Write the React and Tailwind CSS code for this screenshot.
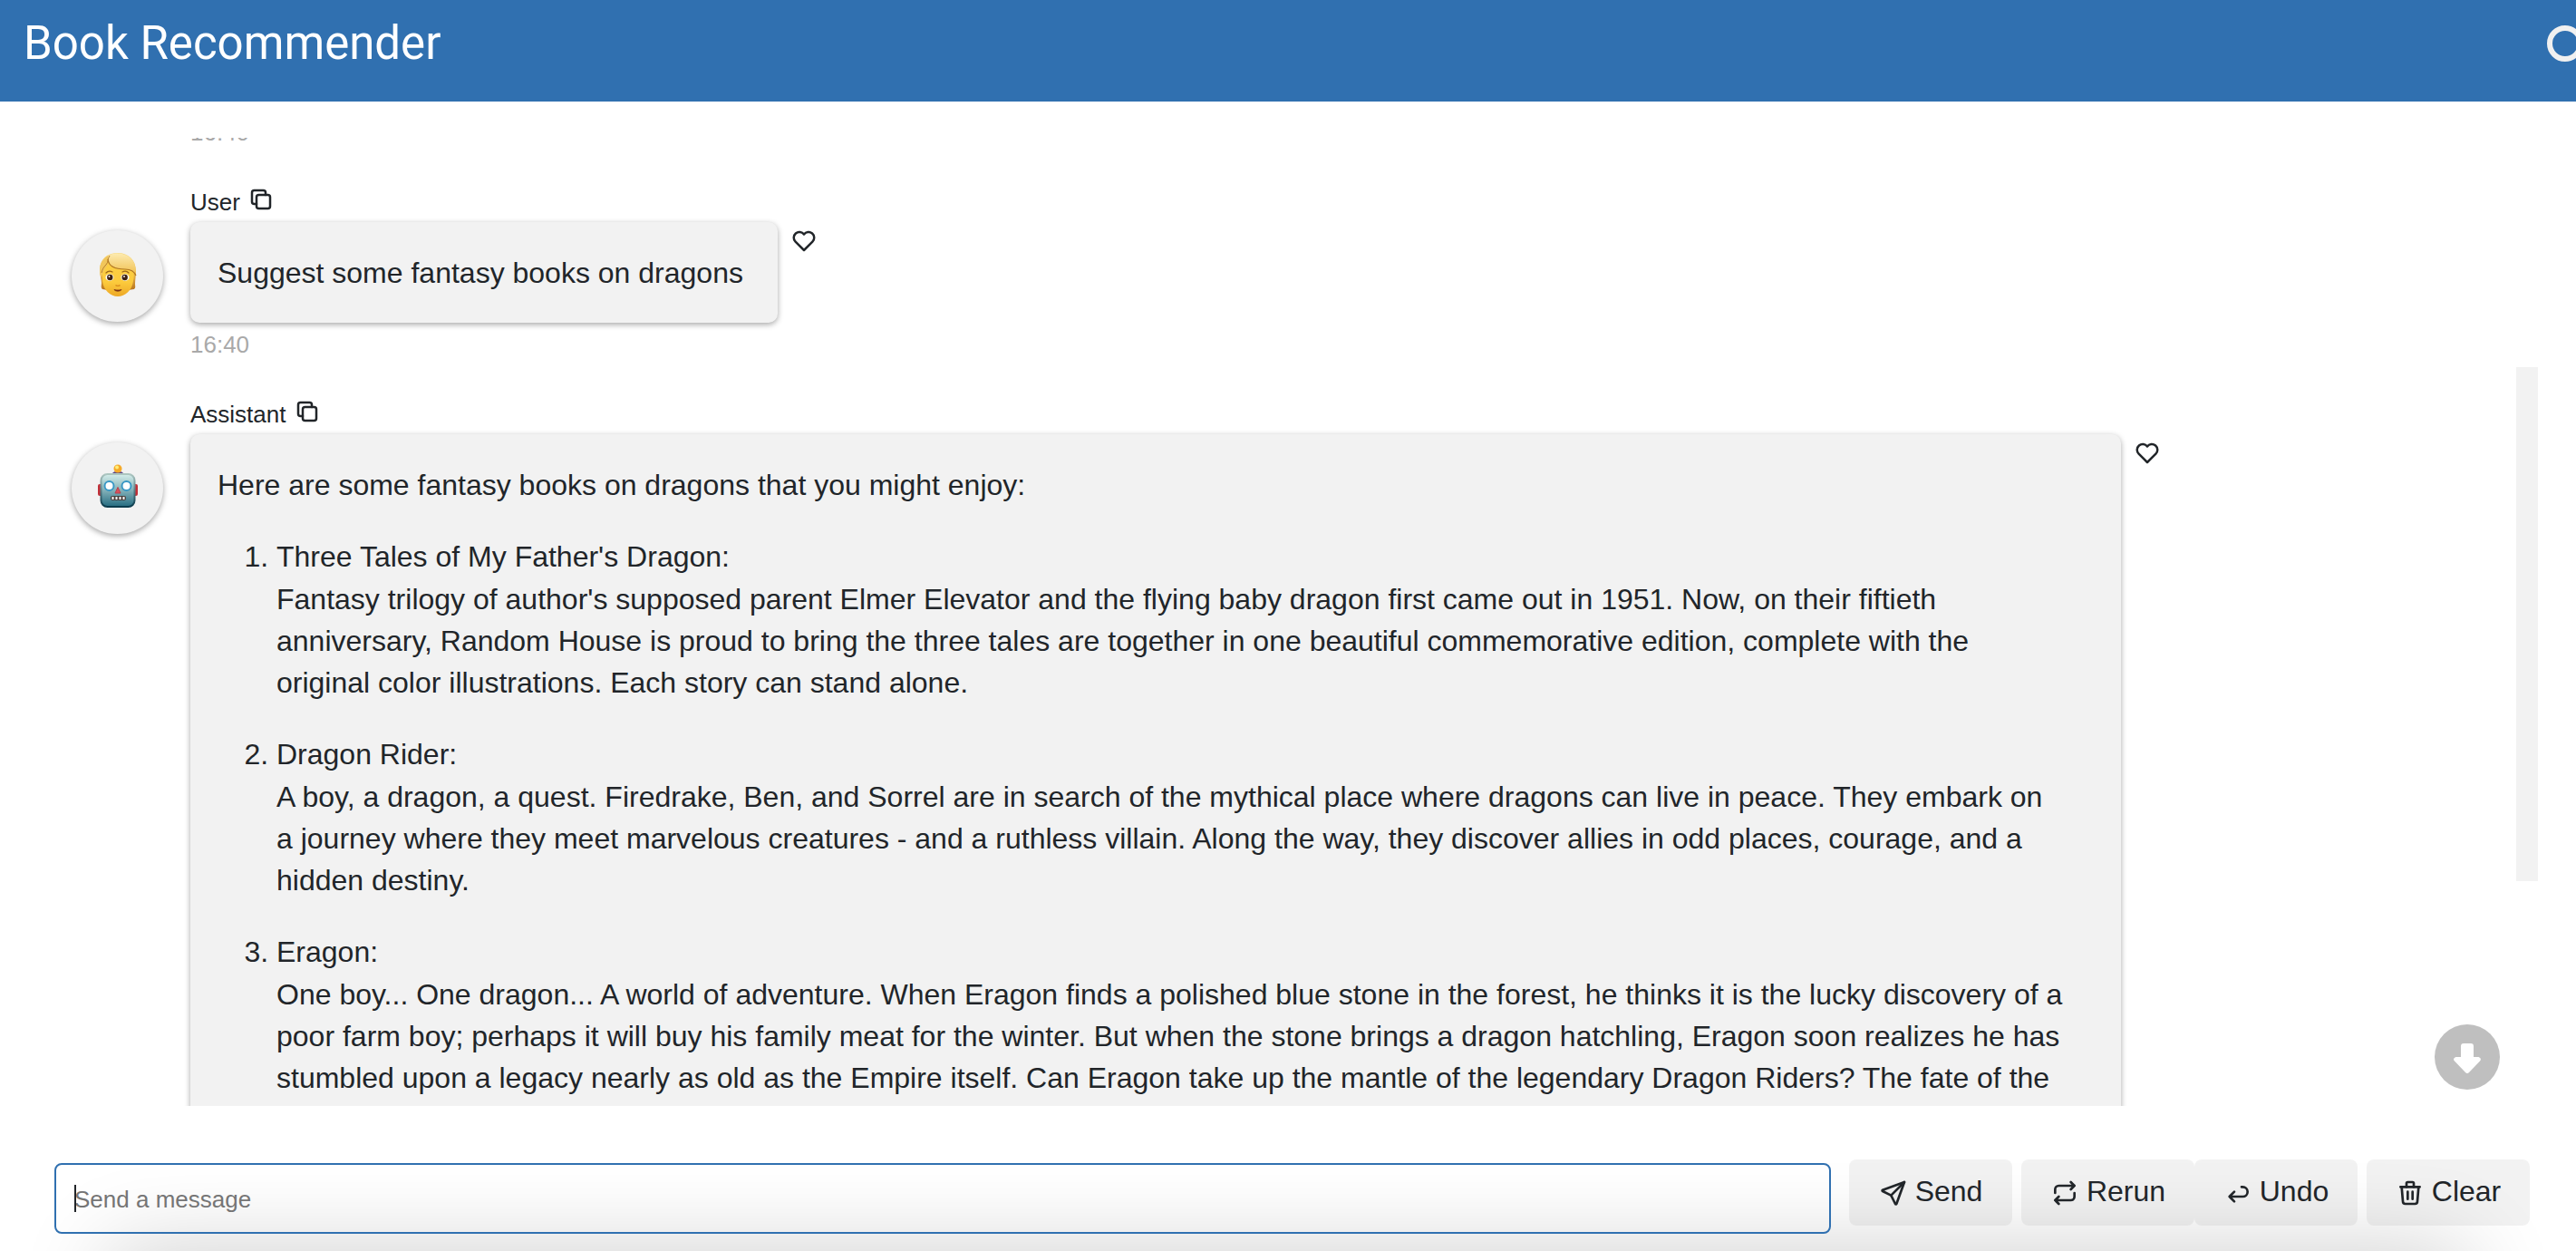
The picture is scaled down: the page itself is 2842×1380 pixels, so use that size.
import { useEffect, useRef } from "react";

const books = [
  {
    title: "Three Tales of My Father's Dragon:",
    text: "Fantasy trilogy of author's supposed parent Elmer Elevator and the flying baby dragon first came out in 1951. Now, on their fiftieth anniversary, Random House is proud to bring the three tales are together in one beautiful commemorative edition, complete with the original color illustrations. Each story can stand alone.",
  },
  {
    title: "Dragon Rider:",
    text: "A boy, a dragon, a quest. Firedrake, Ben, and Sorrel are in search of the mythical place where dragons can live in peace. They embark on a journey where they meet marvelous creatures - and a ruthless villain. Along the way, they discover allies in odd places, courage, and a hidden destiny.",
  },
  {
    title: "Eragon:",
    text: "One boy... One dragon... A world of adventure. When Eragon finds a polished blue stone in the forest, he thinks it is the lucky discovery of a poor farm boy; perhaps it will buy his family meat for the winter. But when the stone brings a dragon hatchling, Eragon soon realizes he has stumbled upon a legacy nearly as old as the Empire itself. Can Eragon take up the mantle of the legendary Dragon Riders? The fate of the",
  },
];

function Icon({ className, children }) {
  return (
    <svg
      className={className}
      viewBox="0 0 24 24"
      fill="none"
      stroke="currentColor"
      strokeWidth="2"
      strokeLinecap="round"
      strokeLinejoin="round"
      aria-hidden="true"
    >
      {children}
    </svg>
  );
}

function CopyIcon() {
  return (
    <Icon className="size-[30px]">
      <path d="M8 10a2 2 0 0 1 2 -2h8a2 2 0 0 1 2 2v8a2 2 0 0 1 -2 2h-8a2 2 0 0 1 -2 -2z" />
      <path d="M16 8v-2a2 2 0 0 0 -2 -2h-8a2 2 0 0 0 -2 2v8a2 2 0 0 0 2 2h2" />
    </Icon>
  );
}

function HeartIcon() {
  return (
    <Icon className="size-[30px]">
      <path d="M19.5 12.572l-7.5 7.428l-7.5 -7.428a5 5 0 1 1 7.5 -6.566a5 5 0 1 1 7.5 6.572" />
    </Icon>
  );
}

function PersonFace() {
  return (
    <svg className="size-[50px]" viewBox="0 0 50 50" aria-hidden="true">
      <defs>
        <linearGradient id="skin" x1="0" y1="0" x2="0" y2="1">
          <stop offset="0" stopColor="#fbcf45" />
          <stop offset="0.6" stopColor="#fccb3d" />
          <stop offset="1" stopColor="#eda826" />
        </linearGradient>
        <linearGradient id="hair" x1="0" y1="0" x2="0" y2="1">
          <stop offset="0" stopColor="#f8dc8a" />
          <stop offset="0.5" stopColor="#eebd4c" />
          <stop offset="1" stopColor="#b8741f" />
        </linearGradient>
        <linearGradient id="fringe" x1="0" y1="0" x2="0" y2="1">
          <stop offset="0" stopColor="#fdebb0" />
          <stop offset="1" stopColor="#efbd4a" />
        </linearGradient>
      </defs>
      <path d="M5 20C5 8 13 1 25 1s20 8 20 20c0 6-1 10-1 14 0 3 1 4-1 6l-7 1H14l-6-1c-2-2-1-4-1-7 0-4-2-8-2-14z" fill="url(#hair)" />
      <path d="M8 26c0-7 3-13 7-17l27 12c1 3 1 7 0 11-1 10-9 17-17 17S9 42 8 32z" fill="url(#skin)" />
      <path d="M14 4C8 8 5 13 5 20c0 4 1 6 2 9 0-6 4-9 7-16z" fill="#f1c65b" />
      <path d="M15 4c8-5 21-2 26 5 3 4 4 9 4 17-2-5-6-7-12-7-8 0-17-1-19-10 0-2 0-3 1-5z" fill="url(#fringe)" />
      <path d="M14 8c1 9 10 11 19 11 6 0 10 2 12 7" fill="none" stroke="#b17722" strokeWidth="1.2" />
      <path d="M16 4c-3 4-1 7-4 10s-4 5-5 9" fill="none" stroke="#bb812b" strokeWidth="1" />
      <path d="M12 23c2-2 5-2 7-1M30 22c2-1 5-1 7 1" fill="none" stroke="#9d6718" strokeWidth="1.2" strokeLinecap="round" />
      <ellipse cx="16" cy="28" rx="4.5" ry="3.8" fill="#fff" />
      <ellipse cx="33" cy="28" rx="4.5" ry="3.8" fill="#fff" />
      <circle cx="16.3" cy="28" r="3.2" fill="#3d2211" />
      <circle cx="32.700" cy="28" r="3.2" fill="#3d2211" />
      <circle cx="15.500" cy="27" r="0.9" fill="#fff" />
      <circle cx="32" cy="27" r="0.9" fill="#fff" />
      <path d="M22.500 36.500c1 1.200 4 1.200 5 0" fill="none" stroke="#d98a1c" strokeWidth="1.3" />
      <path d="M21 41.500c3 .7 5 .7 8 0-1 2.200-7 2.200-8 0z" fill="#7b3415" stroke="#7b3415" strokeWidth="0.8" />
    </svg>
  );
}

function RobotFace() {
  return (
    <svg className="size-[50px]" viewBox="0 0 50 50" aria-hidden="true">
      <defs>
        <linearGradient id="metal" x1="0" y1="0" x2="0" y2="1">
          <stop offset="0" stopColor="#d5eeea" />
          <stop offset="0.5" stopColor="#82b0b8" />
          <stop offset="1" stopColor="#246b80" />
        </linearGradient>
        <linearGradient id="rim" x1="0" y1="0" x2="0" y2="1">
          <stop offset="0" stopColor="#adc6c1" />
          <stop offset="0.6" stopColor="#47717b" />
          <stop offset="1" stopColor="#093b4d" />
        </linearGradient>
      </defs>
      <rect x="3" y="22" width="44" height="13" rx="2" fill="#c22f38" />
      <path d="M19 10c2-3 10-3 12 0-1 5-11 5-12 0z" fill="#5e4781" />
      <circle cx="25" cy="5" r="4.5" fill="#f5aa29" />
      <circle cx="24" cy="3.5" r="2" fill="#ffed77" />
      <rect x="6.5" y="11" width="37" height="36" rx="7" fill="url(#metal)" stroke="url(#rim)" strokeWidth="2" />
      <circle cx="15.5" cy="24" r="5" fill="#fff" stroke="#3998c5" strokeWidth="2" />
      <circle cx="34.5" cy="24" r="5" fill="#fff" stroke="#3998c5" strokeWidth="2" />
      <path d="M25 25.500l3 6.500h-6z" fill="#dc505a" stroke="#b8404d" />
      <rect x="17" y="35" width="17" height="5" rx="2" fill="#4b403d" />
      <path d="M19.5 36v3M23.5 36v3M27.5 36v3M31.5 36v3" stroke="#fff" strokeWidth="2" />
    </svg>
  );
}

function Message({ name, face, time, children }) {
  return (
    <article className="grid grid-cols-[101px_minmax(0,1fr)] gap-x-[30px]">
      <div className="mt-[49px] flex size-[101px] items-center justify-center rounded-full bg-[#f2f2f2] pb-1 shadow-[0_2px_6px_rgba(0,0,0,0.35)]">
        {face}
      </div>
      <div className="min-w-0">
        <div className="flex h-10 items-center gap-2 pb-1">
          <span className="text-[26px] leading-8">{name}</span>
          <button type="button" aria-label="Copy message" className="-mt-1.5">
            <CopyIcon />
          </button>
        </div>
        <div className="flex items-start gap-[14px]">
          <div className="max-w-[2130px] rounded-[10px] bg-[#f2f2f2] pt-[33px] pr-[38px] pb-8 pl-[30px] text-[32px] leading-[46px] shadow-[0_2px_6px_rgba(0,0,0,0.35)]">
            {children}
          </div>
          <button type="button" aria-label="Like message" className="mt-1.5">
            <HeartIcon />
          </button>
        </div>
        {time && <time className="mt-2 block text-[26px] leading-8 text-[#a9a9a9]">{time}</time>}
      </div>
    </article>
  );
}

function ActionButton({ label, className, children }) {
  return (
    <button
      type="button"
      className={`flex h-[73px] items-center justify-center gap-2 rounded-lg bg-black/5 text-[32px] leading-10 ${className}`}
    >
      <Icon className="size-8">{children}</Icon>
      <span className="pb-1">{label}</span>
    </button>
  );
}

export default function App() {
  const input = useRef(null);
  useEffect(() => {
    input.current.focus();
  }, []);

  return (
    <div className="flex h-screen flex-col overflow-hidden bg-white font-['Liberation_Sans',Arial,sans-serif] text-[#212529]">
      <header className="flex h-28 shrink-0 items-start justify-between bg-[#3070b0] pt-7 pl-[26px]">
        <h1 className="font-[Roboto,sans-serif] text-[51px] leading-10 text-white">Book Recommender</h1>
        <div className="-mr-2 size-10 shrink-0 rounded-full border-6 border-[#f0f0f0]" role="status" aria-label="Idle" />
      </header>

      <main className="relative mt-10 flex min-h-0 flex-1 pr-[42px] pl-[67px]">
        <div className="min-w-0 flex-1 overflow-hidden pl-3">
          <time className="-mt-[22px] ml-[131px] block text-[26px] leading-8 text-[#a9a9a9]">16:40</time>
          <div className="mt-[43px]">
            <Message name="User" face={<PersonFace />} time="16:40">
              <p>Suggest some fantasy books on dragons</p>
            </Message>
          </div>
          <div className="mt-[43px]">
            <Message name="Assistant" face={<RobotFace />}>
              <p>Here are some fantasy books on dragons that you might enjoy:</p>
              <ol className="mt-8 list-decimal space-y-8 pr-6 pl-[65px]">
                {books.map((book) => (
                  <li key={book.title} className="leading-[48px]">
                    <p>{book.title}</p>
                    <p className="leading-[46px]">{book.text}</p>
                  </li>
                ))}
              </ol>
            </Message>
          </div>
        </div>
        <div className="mt-[253px] h-[567px] w-6 shrink-0 bg-[#f2f2f2]" />
        <button
          type="button"
          aria-label="Scroll to latest"
          className="absolute right-[84px] bottom-[18px] flex size-[72px] items-center justify-center rounded-full bg-[#bfbfbf] pt-1 text-white"
        >
          <svg className="size-9" viewBox="0 0 36 36" fill="currentColor" aria-hidden="true">
            <path d="M14 1h8q3 0 3 3v12h4.5c3 0 4.5 2.5 2.5 4.5L20 33q-2 2-4 0L4 20.5c-2-2-.5-4.5 2.5-4.5H11V4q0-3 3-3z" />
          </svg>
        </button>
      </main>

      <footer className="relative isolate flex h-40 shrink-0 items-start pt-[59px] pr-[51px] pl-[60px]">
        <div className="absolute inset-x-[120px] top-full -z-10 h-24 shadow-[0_0_100px_rgba(0,0,0,0.2)]" />
        <div className="relative mt-1 min-w-0 flex-1">
          <input
            ref={input}
            type="text"
            aria-label="Message"
            placeholder="Send a message"
            className="block h-[78px] w-full rounded-lg border-2 border-[#3070b0] px-5 pt-0.5 text-[26px] caret-transparent outline-none placeholder:text-[#757575]"
          />
          <span className="absolute top-6 left-[22px] h-[30px] w-0.5 bg-[#212529]" />
        </div>
        <div className="ml-5 flex">
          <ActionButton label="Send" className="w-[180px]">
            <path d="M10 14l11 -11" />
            <path d="M21 3l-6.5 18a.55 .55 0 0 1 -1 0l-3.5 -7l-7 -3.5a.55 .55 0 0 1 0 -1l18 -6.5" />
          </ActionButton>
          <ActionButton label="Rerun" className="ml-[10px] w-[191px]">
            <path d="M4 12v-3a3 3 0 0 1 3 -3h13m-3 -3l3 3l-3 3" />
            <path d="M20 12v3a3 3 0 0 1 -3 3h-13m3 3l-3 -3l3 -3" />
          </ActionButton>
          <ActionButton label="Undo" className="w-[180px]">
            <path d="M9 11l-4 4l4 4m-4 -4h11a4 4 0 0 0 0 -8h-1" />
          </ActionButton>
          <ActionButton label="Clear" className="ml-[10px] w-[180px]">
            <path d="M4 7h16M10 11v6M14 11v6" />
            <path d="M5 7l1 12a2 2 0 0 0 2 2h8a2 2 0 0 0 2 -2l1 -12" />
            <path d="M9 7v-3a1 1 0 0 1 1 -1h4a1 1 0 0 1 1 1v3" />
          </ActionButton>
        </div>
      </footer>
    </div>
  );
}
